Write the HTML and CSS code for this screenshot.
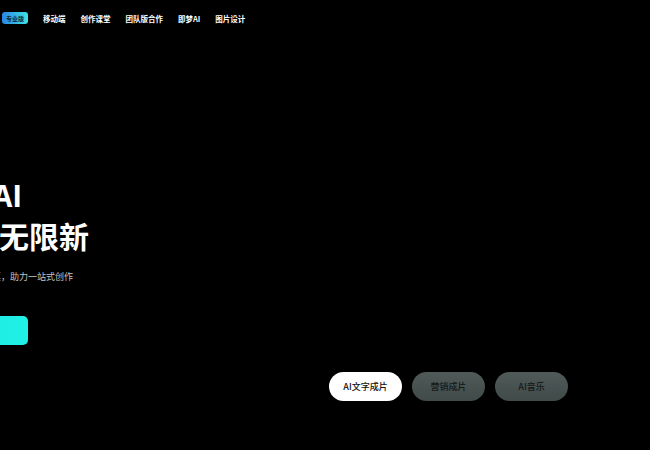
FILE: index.html
```html
<!DOCTYPE html>
<html lang="zh-CN">
  <head>
    <meta charset="UTF-8" />
    <meta name="viewport" content="width=device-width, initial-scale=1.0" />
    <title>即梦AI</title>
    <link rel="stylesheet" href="styles.css">
  </head>
  <body>
    <div class="header">
      <span class="badge">专业版</span>
      <a class="nav-item" href="#">移动端</a>
      <a class="nav-item" href="#">创作课堂</a>
      <a class="nav-item" href="#">团队版合作</a>
      <a class="nav-item" href="#">即梦AI</a>
      <a class="nav-item" href="#">图片设计</a>
    </div>

    <div class="hero">
      <h1 class="title">
        <span class="title-line">即梦AI</span>
        <span class="title-line second">创意无限新</span>
      </h1>
      <p class="subtitle">让灵感即刻成真，助力一站式创作</p>
      <a class="start-btn" href="#">开始创作</a>
    </div>

    <div class="tabs">
      <button class="tab active">AI文字成片</button>
      <button class="tab">营销成片</button>
      <button class="tab">AI音乐</button>
    </div>
  </body>
</html>
```

FILE: styles.css
```css
body {
  font-family: "Noto Sans CJK SC", "Noto Sans", sans-serif;
  margin: 0;
  padding: 0;
  background-color: #000;
  color: #fff;
  width: 650px;
  height: 450px;
  overflow: hidden;
}
.header {
  display: flex;
  align-items: center;
  height: 36px;
  padding-left: 2px;
}
.badge {
  display: flex;
  align-items: center;
  justify-content: center;
  width: 26px;
  height: 12px;
  border-radius: 3px;
  background: linear-gradient(90deg, #2a86e4, #3fe3e6);
  color: #0d2a3a;
  font-size: 6px;
  font-weight: bold;
  margin-right: 15px;
}
.nav-item {
  color: #fff;
  text-decoration: none;
  font-size: 7.5px;
  font-weight: bold;
  margin-right: 15px;
}
/* hero runs off the left edge of the window */
.hero {
  margin-left: -67px;
  margin-top: 138px;
}
.title {
  margin: 0;
  font-size: 30px;
  line-height: 41px;
  font-weight: bold;
  color: #fff;
}
.title-line {
  display: block;
}
.title-line.second {
  margin-left: 6px;
}
.subtitle {
  margin: 14px 0 0 5px;
  font-size: 9px;
  color: #c4c4c4;
}
.start-btn {
  display: block;
  width: 95px;
  height: 29px;
  margin-top: 33px;
  border-radius: 5px;
  background: linear-gradient(90deg, #1ee8e4, #20f0e6);
  color: transparent;
  text-decoration: none;
}
.tabs {
  display: flex;
  gap: 10px;
  padding-left: 329px;
  margin-top: 27px;
}
.tab {
  width: 73px;
  height: 29px;
  border: none;
  border-radius: 15px;
  background: linear-gradient(180deg, #505a59, #404a49);
  color: #141919;
  font-family: inherit;
  font-size: 9px;
  font-weight: 500;
  padding: 0;
}
.tab.active {
  background: #fff;
  color: #111;
}
```
